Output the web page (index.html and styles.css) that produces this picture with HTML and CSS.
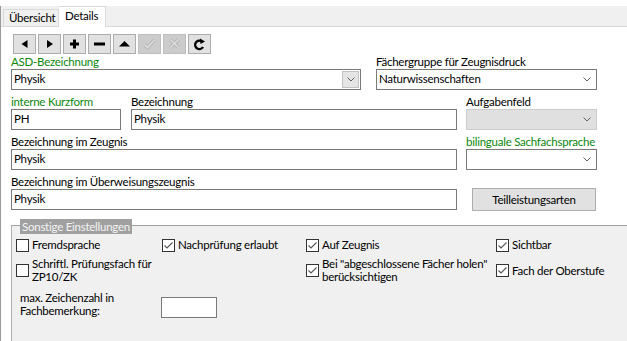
FILE: index.html
```html
<!DOCTYPE html>
<html lang="de">
<head>
    <meta charset="UTF-8">
    <title>Fach Details</title>
    <link rel="stylesheet" href="styles.css">
</head>
<body>
  <div class="window">
    <div class="tabs">
      <div class="tab">Übersicht</div>
      <div class="tab active">Details</div>
    </div>

    <div class="page">
      <!-- navigation toolbar -->
      <div class="toolbar">
        <button class="tool"><svg viewBox="0 0 21 18"><polygon points="7.5,9 13.5,5 13.5,13"/></svg></button>
        <button class="tool"><svg viewBox="0 0 21 18"><polygon points="8,5 14,9 8,13"/></svg></button>
        <button class="tool"><svg viewBox="0 0 21 18"><rect x="6" y="7.5" width="9" height="3"/><rect x="9" y="4.5" width="3" height="9"/></svg></button>
        <button class="tool"><svg viewBox="0 0 21 18"><rect x="5" y="7.5" width="11" height="3"/></svg></button>
        <button class="tool"><svg viewBox="0 0 21 18"><polygon points="5,11.5 10.5,6 16,11.5"/></svg></button>
        <button class="tool disabled"><svg viewBox="0 0 21 18"><path class="ghost-out" d="M5.5 9.5 L8.5 12.5 L15.5 5"/><path class="ghost-in" d="M5.5 9.5 L8.5 12.5 L15.5 5"/></svg></button>
        <button class="tool disabled"><svg viewBox="0 0 21 18"><path class="ghost-out" d="M6.5 4.5 L14.5 12.5 M14.5 4.5 L6.5 12.5"/><path class="ghost-in" d="M6.5 4.5 L14.5 12.5 M14.5 4.5 L6.5 12.5"/></svg></button>
        <button class="tool"><svg viewBox="0 0 21 18"><path class="redo" d="M14 12 A4.2 4.2 0 1 1 12.5 6.2"/><polygon points="11,3.5 16,6.5 11.5,9"/></svg></button>
      </div>

      <div class="form">
        <div class="row">
          <div class="field w350">
            <span class="label green">ASD-Bezeichnung</span>
            <div class="select">Physik<span class="drop boxed"><svg viewBox="0 0 8 5"><path d="M0.5 0.5 L4 4 L7.5 0.5"/></svg></span></div>
          </div>
          <div class="field w221 gap15">
            <span class="label">Fächergruppe für Zeugnisdruck</span>
            <div class="select">Naturwissenschaften<span class="drop"><svg viewBox="0 0 8 5"><path d="M0.5 0.5 L4 4 L7.5 0.5"/></svg></span></div>
          </div>
        </div>

        <div class="row">
          <div class="field w110">
            <span class="label green">interne Kurzform</span>
            <div class="input">PH</div>
          </div>
          <div class="field w326 gap10">
            <span class="label">Bezeichnung</span>
            <div class="input">Physik</div>
          </div>
          <div class="field w131 gap9">
            <span class="label">Aufgabenfeld</span>
            <div class="select off"><span class="drop"><svg viewBox="0 0 8 5"><path d="M0.5 0.5 L4 4 L7.5 0.5"/></svg></span></div>
          </div>
        </div>

        <div class="row">
          <div class="field w446">
            <span class="label">Bezeichnung im Zeugnis</span>
            <div class="input">Physik</div>
          </div>
          <div class="field w131 gap9">
            <span class="label green">bilinguale Sachfachsprache</span>
            <div class="select"><span class="drop"><svg viewBox="0 0 8 5"><path d="M0.5 0.5 L4 4 L7.5 0.5"/></svg></span></div>
          </div>
        </div>

        <div class="row">
          <div class="field w446">
            <span class="label">Bezeichnung im Überweisungszeugnis</span>
            <div class="input">Physik</div>
          </div>
          <button class="btn">Teilleistungsarten</button>
        </div>
      </div>

      <!-- group box -->
      <div class="group">
        <span class="legend">Sonstige Einstellungen</span>
        <div class="checks">
          <label class="check"><span class="box"></span>Fremdsprache</label>
          <label class="check"><span class="box on"></span>Nachprüfung erlaubt</label>
          <label class="check"><span class="box on"></span>Auf Zeugnis</label>
          <label class="check"><span class="box on"></span>Sichtbar</label>

          <label class="check two"><span class="box"></span><span>Schriftl. Prüfungsfach für<br>ZP10/ZK</span></label>
          <span></span>
          <label class="check two"><span class="box on"></span><span>Bei "abgeschlossene Fächer holen"<br>berücksichtigen</span></label>
          <label class="check two"><span class="box on"></span><span>Fach der Oberstufe</span></label>
        </div>
        <div class="maxrow">
          <span class="maxlabel">max. Zeichenzahl in<br>Fachbemerkung:</span>
          <div class="input small"></div>
        </div>
      </div>
    </div>
  </div>
</body>
</html>
```

FILE: styles.css
```css
* {
    margin: 0;
    padding: 0;
    box-sizing: border-box;
}

body {
    font-family: Lato, "Noto Sans", sans-serif;
    font-size: 11.5px;
    letter-spacing: -0.25px;
    color: #000;
    background: #fff;
    width: 627px;
    height: 341px;
    overflow: hidden;
}

.window {
    height: 341px;
    border-left: 1px solid #9a9a9a;
}

/* Tabs */
.tabs {
    margin-top: 6px;
    height: 21px;
    background: #f0f0f0;
    border-bottom: 1px solid #d9d9d9;
    display: flex;
    align-items: flex-end;
    padding-left: 2px;
}

.tab {
    height: 17px;
    width: 56px;
    padding-left: 5px;
    line-height: 15px;
    border: 1px solid #d9d9d9;
    border-bottom: none;
    background: #f0f0f0;
    white-space: nowrap;
}

.tab.active {
    height: 21px;
    width: 47px;
    line-height: 17px;
    margin-bottom: -1px;
    background: #fff;
    padding-left: 6px;
    border-left: none;
}

/* Toolbar */
.toolbar {
    display: flex;
    gap: 2px;
    margin: 7px 0 0 12px;
}

.tool {
    width: 23px;
    height: 20px;
    background: #e1e1e1;
    border: 1px solid #adadad;
    display: flex;
    align-items: center;
    justify-content: center;
}

.tool svg {
    width: 21px;
    height: 18px;
    fill: #000;
}

.tool.disabled {
    background: #cccccc;
    border-color: #bfbfbf;
}

.ghost-out {
    fill: none;
    stroke: #b5b5b5;
    stroke-width: 3.4;
}

.ghost-in {
    fill: none;
    stroke: #dedede;
    stroke-width: 1.6;
}

.redo {
    fill: none;
    stroke: #000;
    stroke-width: 2.4;
}

/* Form */
.form {
    padding-left: 10px;
    display: flex;
    flex-direction: column;
    gap: 4px;
}

.row {
    display: flex;
    align-items: flex-end;
}

.field {
    display: flex;
    flex-direction: column;
}

.label {
    line-height: 15px;
    white-space: nowrap;
}

.label.green {
    color: #0b870b;
}

.w350 { width: 350px; }
.w221 { width: 221px; }
.w110 { width: 110px; }
.w326 { width: 326px; }
.w131 { width: 131px; }
.w446 { width: 446px; }
.gap15 { margin-left: 15px; }
.gap10 { margin-left: 10px; }
.gap9 { margin-left: 9px; }

.input,
.select {
    height: 21px;
    border: 1px solid #7a7a7a;
    background: #fff;
    padding: 0 2px;
    line-height: 18px;
    position: relative;
}

.select.off {
    background: #e0e0e0;
    border-color: #cccccc;
}

.drop {
    position: absolute;
    right: 1px;
    top: 1px;
    width: 17px;
    height: 17px;
    display: flex;
    align-items: center;
    justify-content: center;
}

.drop svg {
    width: 8px;
    height: 5px;
    fill: none;
    stroke: #606060;
    stroke-width: 1;
}

.drop.boxed {
    background: #e5e5e5;
    border: 1px solid #c2c2c2;
}

.btn {
    margin: 0 0 -1px 15px;
    width: 124px;
    height: 23px;
    background: #e1e1e1;
    border: 1px solid #adadad;
    font: inherit;
    letter-spacing: inherit;
}

/* Group box */
.group {
    position: relative;
    margin: 15px 0 0 10px;
    height: 130px;
    background: #f0f0f0;
    border-top: 1px solid #a0a0a0;
    border-left: 1px solid #b0b0b0;
    padding: 12px 0 0 4px;
}

.legend {
    position: absolute;
    left: 8px;
    top: -7px;
    background: #a0a0a0;
    color: #f4f4f4;
    padding: 0 2px;
    line-height: 15px;
}

.checks {
    display: grid;
    grid-template-columns: 146px 144px 190px auto;
    row-gap: 5px;
}

.check {
    display: flex;
    align-items: center;
    gap: 3px;
    line-height: 14px;
    white-space: nowrap;
}

.check.two {
    line-height: 13px;
}

.box {
    width: 13px;
    height: 13px;
    border: 1px solid #333;
    background: #fff;
    flex-shrink: 0;
}

.box.on {
    background: #fff url("data:image/svg+xml,%3Csvg xmlns='http://www.w3.org/2000/svg' viewBox='0 0 11 11'%3E%3Cpath d='M1.5 5.5 L4 8 L9.5 2.5' fill='none' stroke='%23555' stroke-width='1.1'/%3E%3C/svg%3E") center / 11px 11px no-repeat;
}

.maxrow {
    display: flex;
    align-items: flex-start;
    margin-top: 8px;
    padding-left: 4px;
}

.maxlabel {
    width: 141px;
    line-height: 13px;
}

.input.small {
    width: 56px;
    margin-top: 6px;
}
```
